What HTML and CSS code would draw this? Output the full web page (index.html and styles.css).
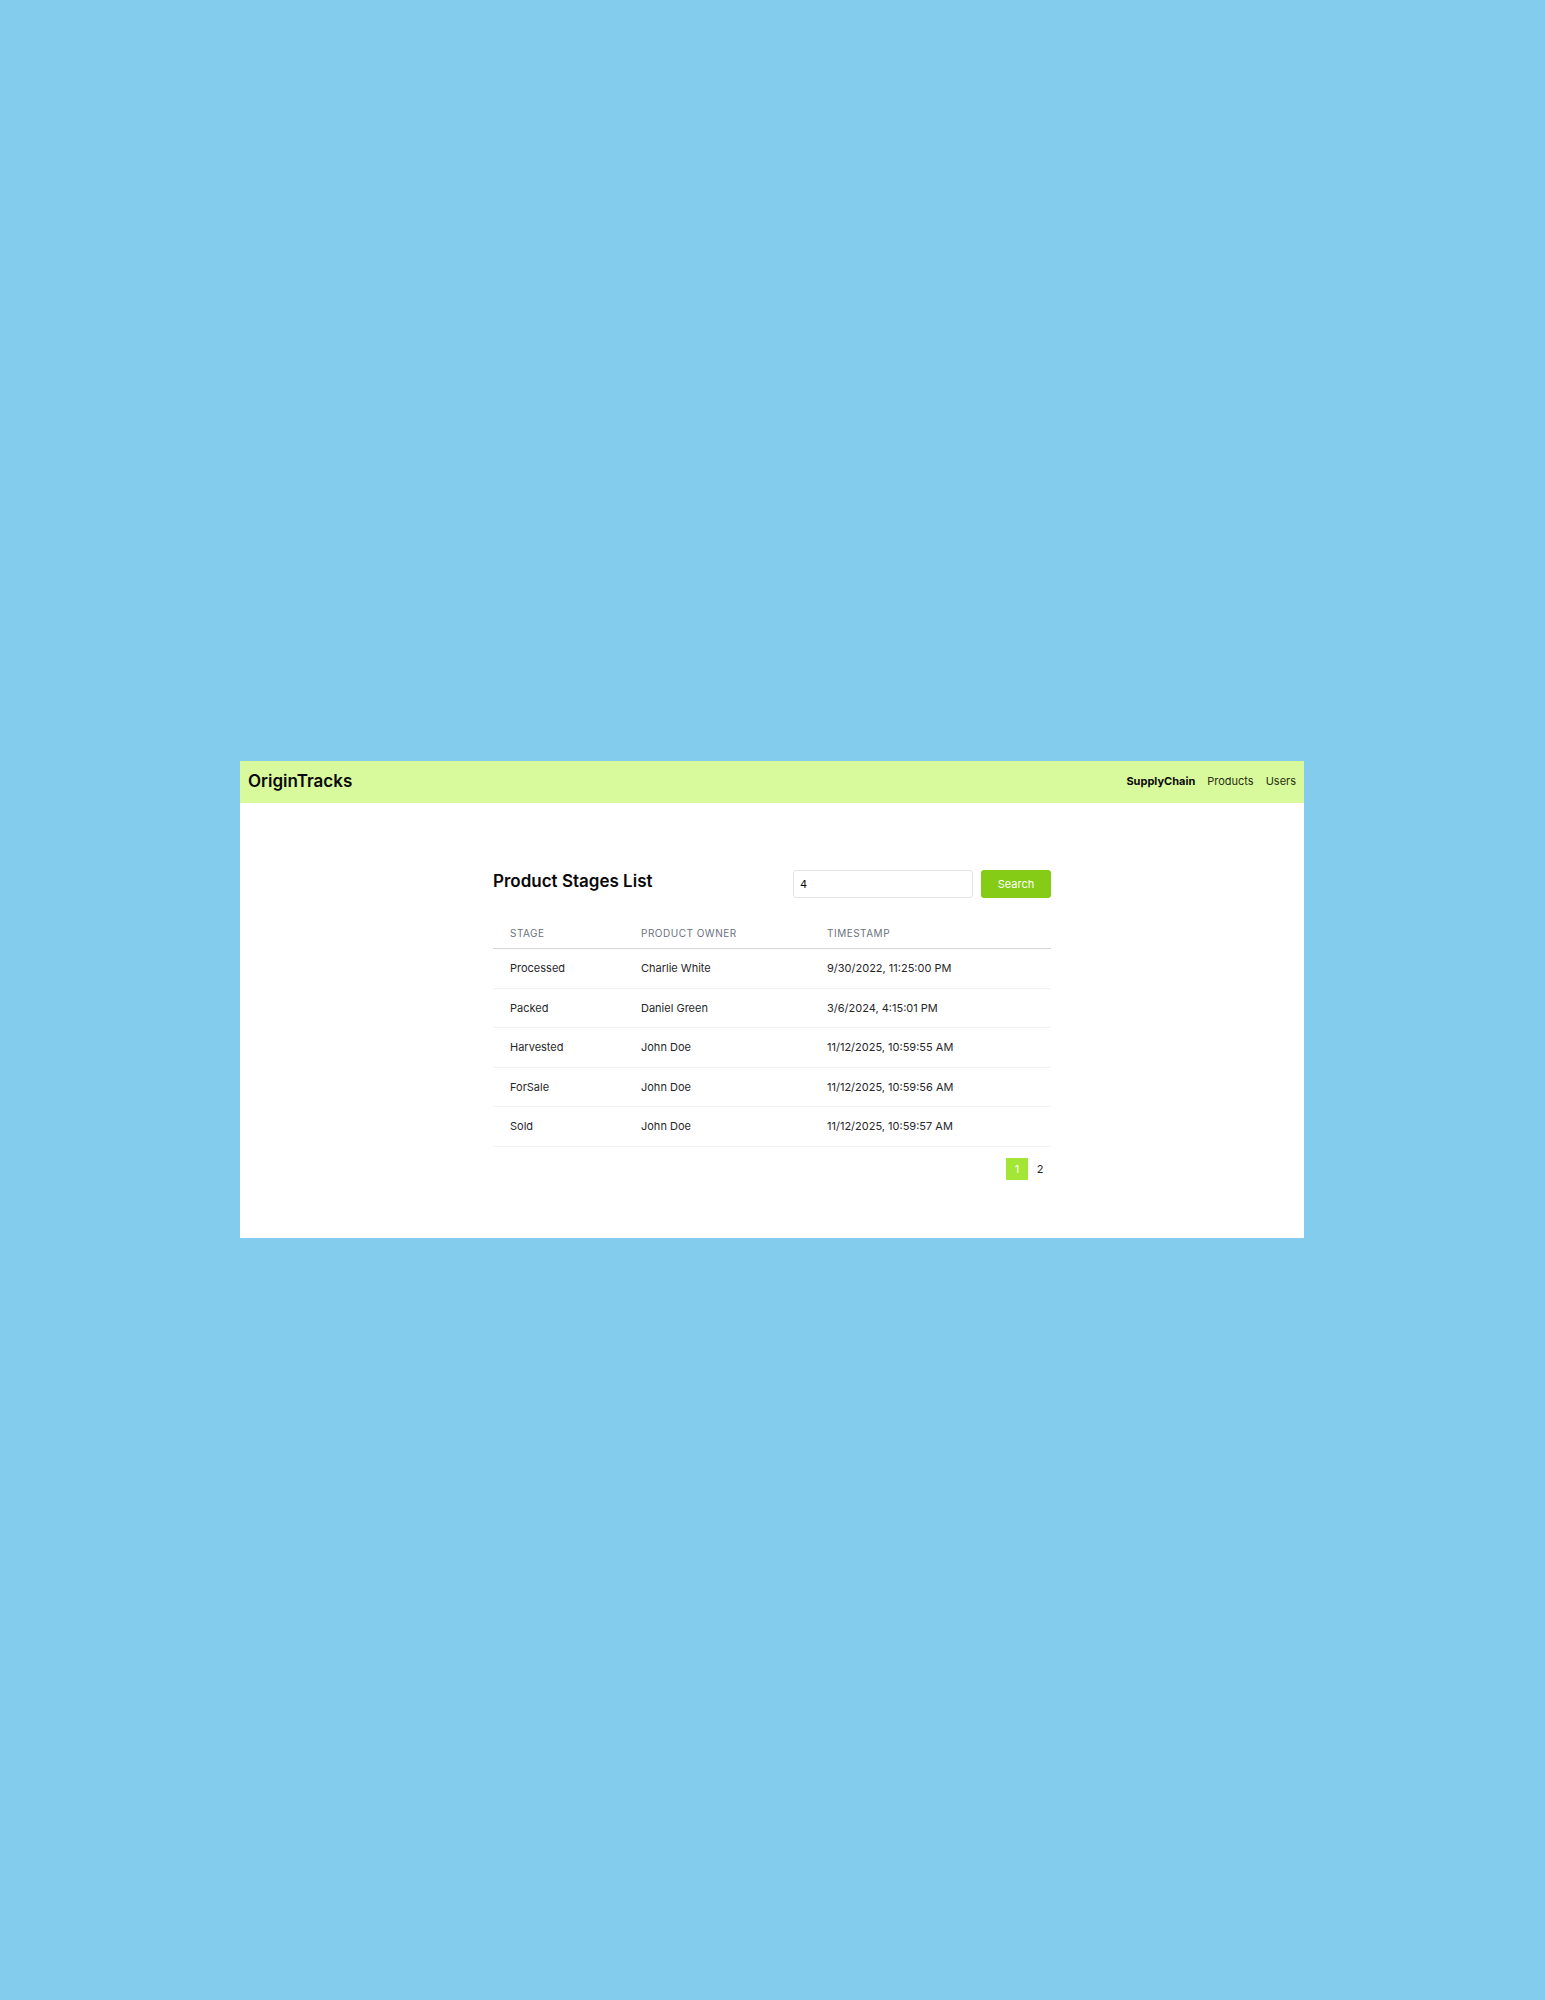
FILE: index.html
```html
<!DOCTYPE html>
<html lang="en">
<head>
<meta charset="utf-8">
<meta name="viewport" content="width=device-width, initial-scale=1">
<title>OriginTracks</title>
<link rel="stylesheet" href="styles.css">
</head>
<body>
<div class="app">
  <header class="topbar">
    <a class="brand" href="#">OriginTracks</a>
    <nav class="nav">
      <a class="nav-link active" href="#">SupplyChain</a>
      <a class="nav-link" href="#">Products</a>
      <a class="nav-link" href="#">Users</a>
    </nav>
  </header>
  <main class="content">
    <div class="toolbar">
      <h1 class="title">Product Stages List</h1>
      <form class="search">
        <input class="search-input" type="text" value="4" aria-label="Product ID">
        <button class="search-button" type="button">Search</button>
      </form>
    </div>
    <table class="stages">
      <colgroup><col class="col-stage"><col class="col-owner"><col></colgroup>
      <thead>
        <tr><th>STAGE</th><th>PRODUCT OWNER</th><th>TIMESTAMP</th></tr>
      </thead>
      <tbody>
        <tr><td>Processed</td><td>Charlie White</td><td>9/30/2022, 11:25:00 PM</td></tr>
        <tr><td>Packed</td><td>Daniel Green</td><td>3/6/2024, 4:15:01 PM</td></tr>
        <tr><td>Harvested</td><td>John Doe</td><td>11/12/2025, 10:59:55 AM</td></tr>
        <tr><td>ForSale</td><td>John Doe</td><td>11/12/2025, 10:59:56 AM</td></tr>
        <tr><td>Sold</td><td>John Doe</td><td>11/12/2025, 10:59:57 AM</td></tr>
      </tbody>
    </table>
    <div class="pagination">
      <button class="page current" type="button" aria-current="page">1</button>
      <button class="page" type="button">2</button>
    </div>
  </main>
</div>
</body>
</html>
```
FILE: styles.css
```css
* { box-sizing: border-box; }

body {
  margin: 0;
  min-height: 100vh;
  display: flex;
  align-items: center;
  padding: 0 241px 1px 240px;
  background: #84ccee;
  color: #09090b;
  font: 11px/16px Inter, "Liberation Sans", sans-serif;
}

.app {
  flex: 1;
  background: #fff;
}

.topbar {
  display: flex;
  align-items: center;
  justify-content: space-between;
  height: 42px;
  padding: 0 8px 2px;
  background: #d9f99d;
}

a {
  color: inherit;
  text-decoration: none;
}

.brand {
  font-size: 17px;
  line-height: 24px;
  font-weight: 600;
}

.nav {
  display: flex;
  gap: 12px;
}

.nav-link { color: #27300f; }

.nav-link.active {
  color: #09090b;
  font-weight: 700;
}

.content {
  width: 558px;
  max-width: 100%;
  margin: 0 auto;
  padding: 67px 0 58px;
}

.toolbar {
  display: flex;
  justify-content: space-between;
}

.title {
  margin: 0;
  font-size: 17px;
  line-height: 22px;
  font-weight: 600;
}

.search {
  display: flex;
  gap: 8px;
}

.search-input,
.search-button {
  height: 28px;
  border-radius: 3px;
  font: inherit;
}

.search-input {
  width: 180px;
  padding: 0 6px;
  border: 1px solid #e4e4e7;
  background: #fff;
  color: #09090b;
}

.search-button {
  width: 70px;
  padding: 0;
  border: 0;
  background: #84cc16;
  color: #fff;
}

.stages {
  width: 100%;
  margin-top: 22px;
  border-collapse: separate;
  border-spacing: 0;
  table-layout: fixed;
}

.col-stage { width: 131px; }
.col-owner { width: 186px; }

.stages th,
.stages td {
  padding: 0 17px;
  text-align: left;
  vertical-align: middle;
}

.stages th {
  height: 29px;
  padding-bottom: 2px;
  border-bottom: 1px solid #d4d4d8;
  color: #6b7280;
  font-size: 10px;
  font-weight: 400;
  letter-spacing: 0.05em;
}

.stages td {
  height: 40px;
  padding-bottom: 1px;
  border-bottom: 1px solid #f1f1f3;
  color: #27272a;
}

.stages tr:nth-child(even) td { height: 39px; }

.pagination {
  display: flex;
  justify-content: flex-end;
  gap: 1px;
  margin-top: 11px;
}

.page {
  width: 22px;
  height: 22px;
  padding: 0;
  border: 0;
  background: none;
  color: #27272a;
  font: inherit;
}

.page.current {
  background: #a3e635;
  color: #fff;
}
```
